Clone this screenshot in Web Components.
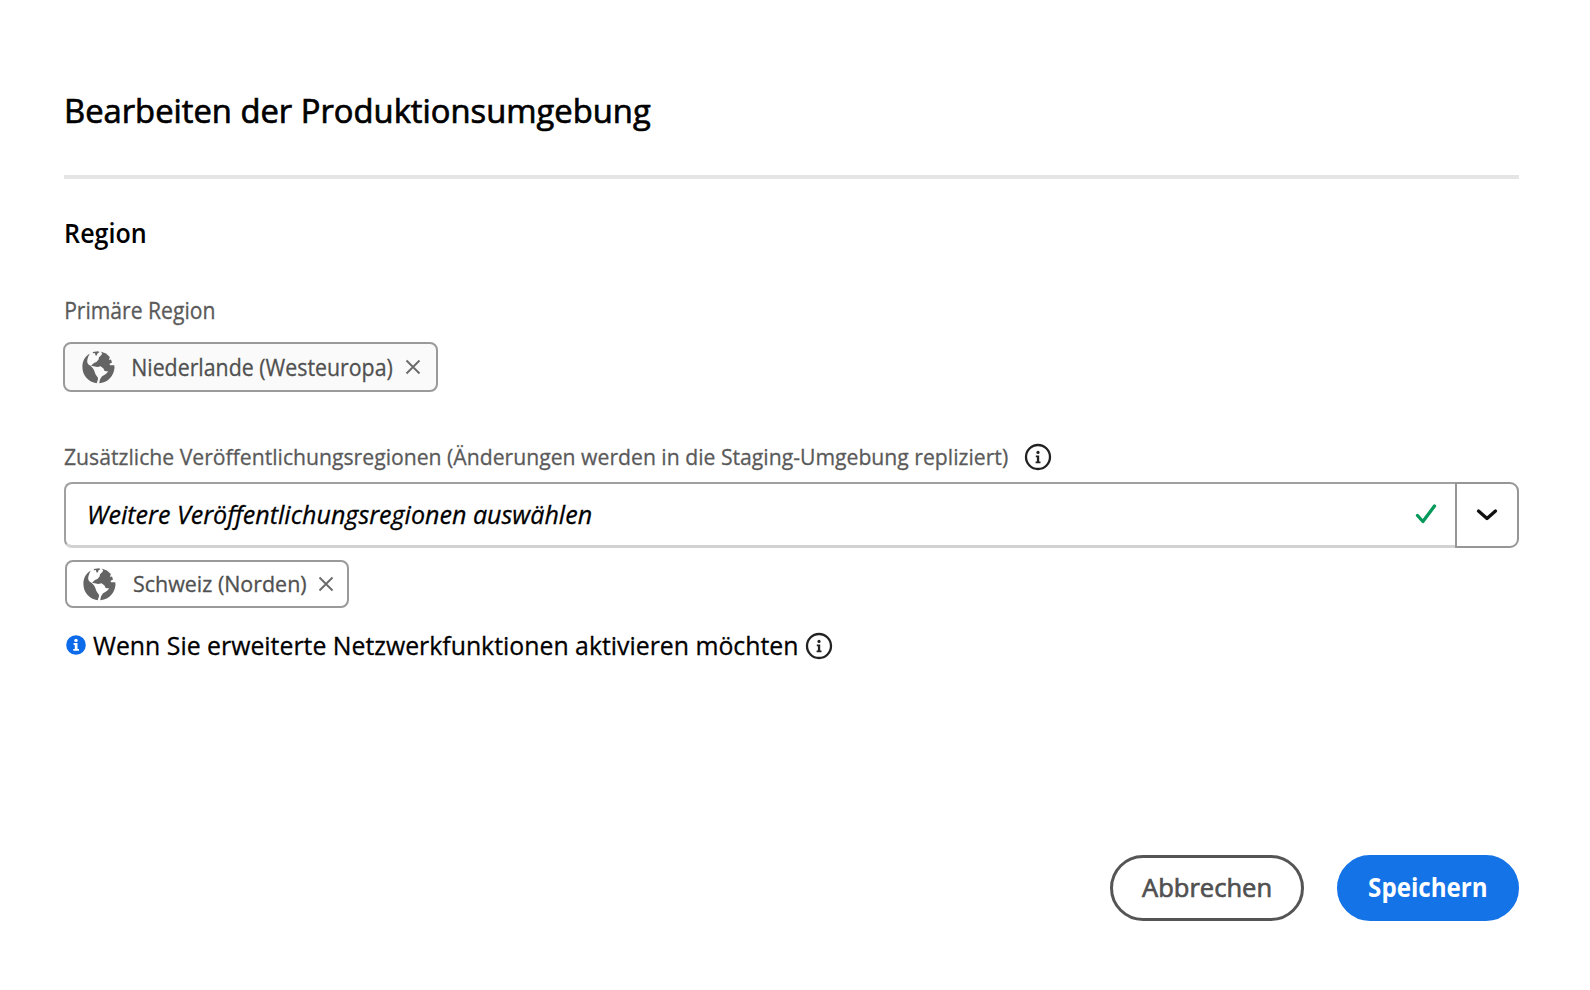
<!DOCTYPE html>
<html lang="de">
<head>
<meta charset="utf-8">
<title>Bearbeiten der Produktionsumgebung</title>
<style>
html,body{margin:0;background:#fff}
body{font-family:"Open Sans","Noto Sans",sans-serif;color:#000}
</style>
</head>
<body>
<env-dialog></env-dialog>
<script>
const FAMILY = '"Open Sans","Noto Sans",sans-serif';
const ctx = document.createElement('canvas').getContext('2d');

function define(name, html, init) {
  const t = document.createElement('template');
  t.innerHTML = html;
  customElements.define(name, class extends HTMLElement {
    connectedCallback() {
      if (this.shadowRoot) return;
      this.attachShadow({ mode: 'open' }).append(t.content.cloneNode(true));
      if (init) init(this, this.shadowRoot);
    }
  });
}

/* One line of text, condensed to a given ink width. */
define('fit-text', `
<style>
:host{display:block;flex:none;white-space:nowrap}
span{display:inline-block;transform-origin:0 50%;-webkit-text-stroke:.3px currentColor}
:host([strong]) span{-webkit-text-stroke-width:.7px}
:host([weight]) span{-webkit-text-stroke-width:0}
</style><span><slot></slot></span>`, (el, root) => {
  const size = +el.getAttribute('size'), width = +el.getAttribute('width');
  const weight = el.getAttribute('weight') || '400';
  const style = el.hasAttribute('italic') ? 'italic' : 'normal';
  const text = el.textContent;
  ctx.font = `${style} ${weight} ${size}px ${FAMILY}`;
  const m = ctx.measureText(text);
  const k = width / (m.actualBoundingBoxLeft + m.actualBoundingBoxRight);
  const line = el.getAttribute('line') + 'px';
  el.style.cssText += `;width:${width}px;height:${line};line-height:${line};font:${style} ${weight} ${size}px/${line} ${FAMILY}`;
  root.querySelector('span').style.transform =
    `translateX(${m.actualBoundingBoxLeft * k}px) scaleX(${k})`;
});

define('info-icon', `
<style>:host{display:block;flex:none;width:28px;height:28px}svg{display:block}</style>
<svg width="28" height="28" viewBox="0 0 28 28"><circle cx="14" cy="14" r="12" fill="none" stroke="#222" stroke-width="2.3"/>
<circle cx="14" cy="9.4" r="1.6" fill="#222"/><path d="M11.8 12.6h3.4v6h1.3v1.6h-4.900v-1.600h1.300v-4.400h-1.100z" fill="#222"/></svg>`);

define('info-badge', `
<style>:host{display:block;flex:none;width:20px;height:20px}svg{display:block}</style>
<svg width="20" height="20" viewBox="0 0 20 20"><circle cx="10" cy="10" r="9.8" fill="#0d6bea"/>
<circle cx="10" cy="5.4" r="1.7" fill="#fff"/><path d="M7.6 8.1h3.9v5.8h1.500v1.800H7.300v-1.800h1.500V10H7.600z" fill="#fff"/></svg>`);

define('globe-icon', `
<style>:host{display:block;flex:none;width:33px;height:33px}svg{display:block}</style>
<svg width="33" height="33" viewBox="0 0 33 33" fill="#646464">
<path d="M7.800 2.600C3 5.400.4 10 .4 16 .4 24.500 6.300 31.100 14.700 32.200 15.300 30.200 16.400 28.500 15.900 26.800 15.500 25.500 14 24.800 13.300 22.700 12.500 20 11.900 18.300 10 16.200 8.500 14.500 6.600 14.100 5.600 12.300 4.600 10.200 5.500 7 7.800 2.600z"/>
<path d="M10.800 1l5.400-.8 1.200 1-1.800 1.100-.8 2.100-1.200.1-.8-2.400-1.900.2z"/>
<path d="M18.500.4L24 2.600 27.800 6.100 27 8.900 29 8.600 30 11.500 27.400 12.900 28.200 14.200 32.300 14.300 32.500 17 31.800 20.500C29.800 27 25 31.400 17.200 32.300L18 28.400 19.800 25.600 23.800 23 26.300 20.600 22.600 20.100 21.500 17.400 18.600 15.300 15.400 16 9 14.800 12 12 14.400 10.900 16.600 8.400 17 6.200 19.200 4.300 20.200 2.300z"/>
</svg>`);

define('region-tag', `
<style>
:host{display:flex;flex:none;align-items:center;box-sizing:border-box;border:2px solid #9a9a9a;border-radius:8px;color:#505050}
.x{display:block;flex:none;margin-left:13px}
globe-icon{margin-right:17px}
</style>
<globe-icon></globe-icon><slot></slot>
<svg class="x" width="16" height="16" viewBox="0 0 16 16"><path d="M1.500 1.500l13 13M14.500 1.500l-13 13" stroke="#6b6b6b" stroke-width="1.900"/></svg>`);

define('region-select', `
<style>
:host{display:flex;height:66px;box-sizing:border-box;color:#000}
.field{flex:1;display:flex;align-items:center;box-sizing:border-box;border:2px solid #a0a0a0;border-right:0;border-bottom:3px solid #d2d2d2;border-radius:8px 0 0 8px;padding:0 17px 2px 23px;justify-content:space-between}
.open{width:64px;box-sizing:border-box;border:2px solid #969696;border-radius:0 9px 9px 0;display:grid;place-items:center}
svg{display:block}
</style>
<div class="field"><slot></slot>
<svg width="24" height="24" viewBox="0 0 24 24"><path d="M3.500 13.500l5.400 6L20.500 4" fill="none" stroke="#059a5c" stroke-width="3.300" stroke-linecap="round" stroke-linejoin="round"/></svg></div>
<div class="open"><svg width="24" height="14" viewBox="0 0 24 14"><path d="M3.500 3l8.500 7.500L20.500 3" fill="none" stroke="#111" stroke-width="3.300" stroke-linecap="round" stroke-linejoin="round"/></svg></div>`);

define('pill-button', `
<style>
:host{display:flex;align-items:center;justify-content:center;box-sizing:border-box;height:66px;border-radius:33px;border:3px solid #555;color:#505050}
:host([primary]){background:#1473e6;border-color:#1473e6;color:#fff}
</style><slot></slot>`);

define('env-dialog', `
<style>
:host{display:flex;flex-direction:column;box-sizing:border-box;width:1590px;height:990px;padding:91px 71px 69px 64px;background:#fff}
.title{margin-left:3px}
hr{border:0;margin:44px 0 0;height:4px;background:#e5e5e5;flex:none}
.section{margin:36px 0 0 2px}
.label{margin:45px 0 0 2px;color:#5a5a5a}
.primary{width:375px;height:50px;margin:16px 0 0 -1px;padding-left:17px;background:#fafafa}
.primary fit-text{margin-left:1px}
.row{display:flex;align-items:center}
.extra{margin-top:50px;color:#5a5a5a}
.extra info-icon{margin-left:16px}
region-select{margin-top:10px}
.second{width:284px;height:48px;margin:12px 0 0 1px;padding-left:16px}
.second fit-text{margin-left:1px;margin-right:-1px}
.note{margin-top:19px}
.note info-badge{margin-left:2px}
.note fit-text{margin-left:7px}
.note info-icon{margin:2px 0 0 8px}
footer{display:flex;justify-content:flex-end;gap:33px;margin-top:auto}
.cancel{width:194px;padding:0 2px 2px 0}
.save{width:182px;padding:0 1px 2px 0}
</style>
<fit-text class="title" size="32.6" strong line="40" width="584">Bearbeiten der Produktionsumgebung</fit-text>
<hr>
<fit-text class="section" size="26.500" weight="600" line="36" width="79">Region</fit-text>
<fit-text class="label" size="22.800" line="30" width="148.5">Primäre Region</fit-text>
<region-tag class="primary"><fit-text size="23.4" line="30" width="259">Niederlande (Westeuropa)</fit-text></region-tag>
<div class="row extra"><fit-text size="22.600" line="30" width="943.5">Zusätzliche Veröffentlichungsregionen (Änderungen werden in die Staging-Umgebung repliziert)</fit-text><info-icon></info-icon></div>
<region-select><fit-text italic size="26.300" line="36" width="502">Weitere Veröffentlichungsregionen auswählen</fit-text></region-select>
<region-tag class="second"><fit-text size="22.600" line="30" width="172">Schweiz (Norden)</fit-text></region-tag>
<div class="row note"><info-badge></info-badge><fit-text size="26.3" line="36" width="703.5">Wenn Sie erweiterte Netzwerkfunktionen aktivieren möchten</fit-text><info-icon></info-icon></div>
<footer>
<pill-button class="cancel"><fit-text size="26.300" strong line="34" width="128">Abbrechen</fit-text></pill-button>
<pill-button class="save" primary><fit-text size="26.300" weight="700" line="34" width="117.5">Speichern</fit-text></pill-button>
</footer>`);
</script>
</body>
</html>
